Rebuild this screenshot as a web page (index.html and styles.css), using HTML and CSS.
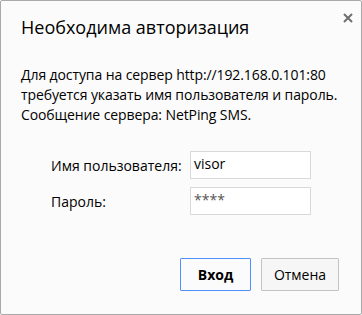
FILE: index.html
```html
<!DOCTYPE html>
<html>
<head>
<meta charset="utf-8">
<link rel="stylesheet" href="styles.css">
</head>
<body>
<div class="dialog">
  <div class="header">
    <h1 class="title">Необходима авторизация</h1>
    <button class="close" aria-label="Закрыть">
      <svg width="10" height="10" viewBox="0 0 10 10"><path d="M1 1L9 9M9 1L1 9" stroke="#6e6e6e" stroke-width="2"/></svg>
    </button>
  </div>
  <p class="message">Для доступа на сервер http://192.168.0.101:80<br>требуется указать имя пользователя и пароль.<br>Сообщение сервера: NetPing SMS.</p>
  <div class="form">
    <label class="label">Имя пользователя:</label>
    <div class="input">visor</div>
    <label class="label">Пароль:</label>
    <div class="input pw">****</div>
  </div>
  <div class="buttons">
    <button class="btn primary">Вход</button>
    <button class="btn">Отмена</button>
  </div>
</div>
</body>
</html>
```
FILE: styles.css
```css
html, body {
  margin: 0;
  padding: 0;
  background: #fbfbfb;
}
.dialog {
  width: 362px;
  height: 315px;
  box-sizing: border-box;
  border: 1px solid #a9a9a9;
  border-radius: 2px;
  background: #fbfbfb;
  font-family: "Open Sans", "Noto Sans", sans-serif;
  color: #000;
  padding: 0 0 0 20px;
}
.header {
  display: flex;
  justify-content: space-between;
  align-items: flex-start;
}
.title {
  margin: 14px 0 0 0;
  font-size: 18px;
  font-weight: normal;
  line-height: 24px;
}
.close {
  border: 0;
  background: none;
  padding: 0;
  margin: 12px 8px 0 0;
  width: 10px;
  height: 10px;
  display: block;
}
.close svg { display: block; }
.message {
  margin: 26px 0 0 0;
  font-size: 14px;
  line-height: 20px;
  white-space: nowrap;
  letter-spacing: -0.1px;
}
.form {
  display: grid;
  grid-template-columns: 139px 121px;
  row-gap: 8px;
  margin: 26px 0 0 30px;
  align-items: center;
}
.label {
  font-size: 14px;
}
.input {
  height: 28px;
  box-sizing: border-box;
  border: 1px solid #d9d9d9;
  background: #fff;
  font-size: 14px;
  padding: 2px 3px;
  line-height: 20px;
}
.input.pw {
  color: #555;
}
.buttons {
  display: flex;
  justify-content: flex-end;
  gap: 10px;
  margin: 43px 22px 0 0;
}
.btn {
  font-family: inherit;
  font-size: 14px;
  height: 33px;
  box-sizing: border-box;
  border: 1px solid #c3c3c3;
  background: #f6f6f6;
  border-radius: 1px;
  padding: 0;
  width: 78px;
  color: #000;
}
.btn.primary {
  width: 71px;
  border-color: #4d90fe;
  background: #fbfbfb;
  font-weight: bold;
}
```
